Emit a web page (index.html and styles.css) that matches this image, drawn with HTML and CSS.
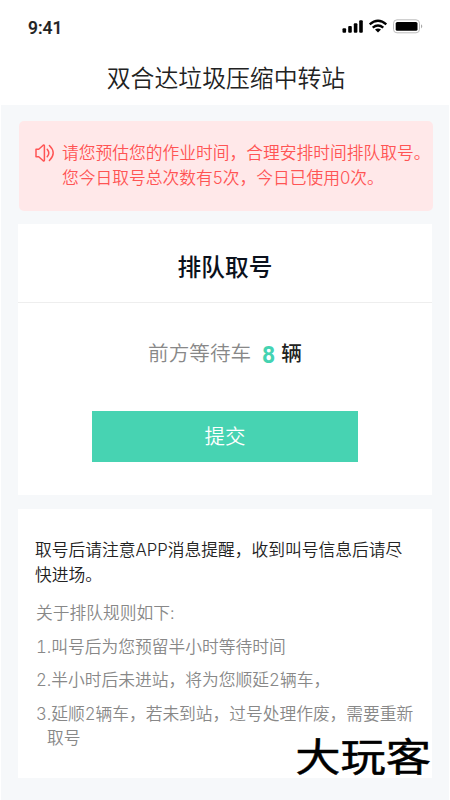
FILE: index.html
```html
<!DOCTYPE html>
<html lang="zh-CN">
<head>
<meta charset="utf-8">
<title>排队取号</title>
<link rel="stylesheet" href="styles.css">
</head>
<body>
<header class="header">
  <div class="status">
    <span class="time">9:41</span>
    <svg class="status-icons" width="82" height="16" viewBox="0 0 82 16">
      <g fill="#000">
        <rect x="0.5" y="9.3" width="3.6" height="4.4" rx="1"/>
        <rect x="6.2" y="7" width="3.6" height="6.7" rx="1"/>
        <rect x="11.8" y="4.2" width="3.6" height="9.5" rx="1"/>
        <rect x="17.2" y="1.2" width="3.6" height="12.5" rx="1"/>
        <path d="M33 10.600q3-2 6 0l-3 3z"/>
        <rect x="53.7" y="3" width="21.8" height="8.8" rx="1.6"/>
      </g>
      <path d="M27.700 5.300q8.300-7 16.600 0M30.700 8.700q5.300-4.300 10.600 0" fill="none" stroke="#000" stroke-width="2.300"/>
      <rect x="51.5" y="0.8" width="26" height="13" rx="3.5" fill="none" stroke="#bdbdbd"/>
      <path d="M79 5.200q2.600 2 0 4.200z" fill="#aaa"/>
    </svg>
  </div>
  <h1 class="title">双合达垃圾压缩中转站</h1>
</header>
<main class="page">
  <section class="notice">
    <svg class="speaker" width="20" height="18" viewBox="0 0 20 18" fill="none" stroke="#ff5454" stroke-width="1.5" stroke-linecap="round" stroke-linejoin="round">
      <path d="M1 5.200h2.700L8.200 1.200q1.200-.7 1.200.7v14.200q0 1.400-1.200.7L3.700 12.800H1z"/>
      <path d="M12.200 5.200q3.200 3.800 0 7.600M14.400 1.500q7.600 7.500 0 15"/>
    </svg>
    <p class="notice-text">请您预估您的作业时间，合理安排时间排队取号。<br>您今日取号总次数有5次，今日已使用0次。</p>
  </section>
  <section class="card queue">
    <h2 class="queue-title">排队取号</h2>
    <div class="waiting"><span class="label">前方等待车</span><span class="count">8</span><span class="unit">辆</span></div>
    <button class="submit">提交</button>
  </section>
  <section class="card rules">
    <p class="lead">取号后请注意APP消息提醒，收到叫号信息后请尽<br>快进场。</p>
    <p class="rule">关于排队规则如下:</p>
    <p class="rule">1.叫号后为您预留半小时等待时间</p>
    <p class="rule">2.半小时后未进站，将为您顺延2辆车，</p>
    <p class="rule hanging">3.延顺2辆车，若未到站，过号处理作废，需要重新<br>取号</p>
    <span class="brand">大玩客</span>
  </section>
</main>
</body>
</html>
```

FILE: styles.css
```css
* { box-sizing: border-box; }
body {
  margin: 0;
  height: 800px;
  overflow: hidden;
  display: flex;
  flex-direction: column;
  background: #fff;
  color: #222;
  font-family: Inter, "Noto Sans CJK SC", sans-serif;
  font-size: 16.75px;
  font-weight: 350;
  line-height: 24.5px;
}
h1, h2, p { margin: 0; }
.header { height: 105px; flex: none; }
.status {
  height: 56px;
  padding: 0 26px 0 28px;
  display: flex;
  align-items: center;
  justify-content: space-between;
}
.time { font: 500 17.5px/20px Roboto, sans-serif; color: #222; -webkit-text-stroke: .2px #222; }
.status-icons { margin-top: -3px; }
.title {
  font-size: 23.85px;
  font-weight: 350;
  line-height: 46px;
  text-align: center;
  padding-left: 2px;
}
.page {
  flex: 1;
  margin: 0 1px;
  padding: 16px 17px 0;
  background: #f6f8fa;
}
.notice {
  width: 414px;
  height: 90px;
  margin: 0 0 13px 1px;
  padding: 20px 0 0 16px;
  display: flex;
  gap: 7px;
  border-radius: 5px;
  background: #ffe8e9;
  color: #ff5454;
  white-space: nowrap;
}
.speaker { flex: none; margin-top: 3px; }
.card { width: 414px; background: #fff; }
.queue {
  height: 271px;
  margin-bottom: 14px;
  display: flex;
  flex-direction: column;
  align-items: center;
}
.queue-title {
  width: 100%;
  height: 79px;
  line-height: 87px;
  border-bottom: 1px solid #eee;
  text-align: center;
  font-size: 23.7px;
  font-weight: 500;
  color: #0b111c;
}
.waiting {
  height: 108px;
  display: flex;
  align-items: center;
  padding-bottom: 5px;
  font-size: 20.6px;
}
.label { color: #888; }
.count { margin: 2px 6px 0 11px; font: 700 23px/28px Roboto, sans-serif; color: #45d3b2; }
.unit { font-weight: 500; }
.submit {
  width: 266px;
  height: 51px;
  padding: 2px 0 0;
  border: 0;
  background: #47d3b2;
  color: #fff;
  font: inherit;
  font-size: 20.5px;
}
.rules {
  position: relative;
  height: 269px;
  padding: 29px 0 0 17px;
  white-space: nowrap;
}
.lead { margin-bottom: 14px; }
.rule { margin: 0 0 9px 1px; color: #888; font-variant-numeric: tabular-nums; }
.hanging { padding-left: 11px; text-indent: -11px; letter-spacing: -.03px; }
.brand {
  position: absolute;
  right: 1px;
  bottom: 0;
  font-size: 39px;
  line-height: 42px;
  font-weight: 400;
  color: #000;
  -webkit-text-stroke: .5px #000;
  transform: scaleX(1.16);
  transform-origin: right;
}
```
